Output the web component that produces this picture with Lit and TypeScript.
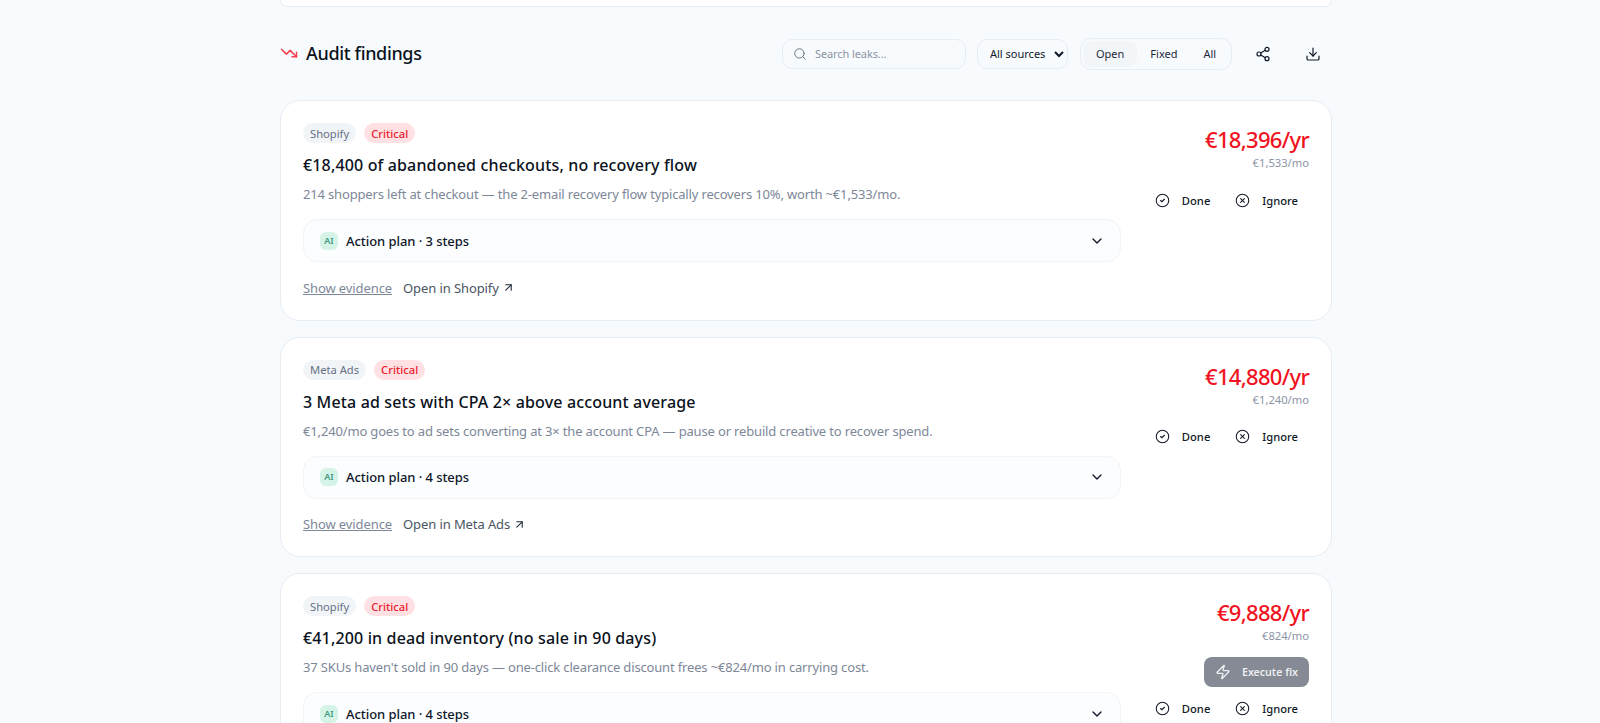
import { LitElement, html, css, svg } from 'lit';
import { customElement } from 'lit/decorators.js';

interface Finding {
  source: string;
  title: string;
  desc: string;
  yearly: string;
  monthly: string;
  steps: number;
  fix?: boolean;
  // the last card runs past the fold, its link row is never on screen
  belowFold?: boolean;
}

const findings: Finding[] = [
  {
    source: 'Shopify',
    title: '€18,400 of abandoned checkouts, no recovery flow',
    desc: '214 shoppers left at checkout — the 2-email recovery flow typically recovers 10%, worth ~€1,533/mo.',
    yearly: '€18,396/yr',
    monthly: '€1,533/mo',
    steps: 3,
  },
  {
    source: 'Meta Ads',
    title: '3 Meta ad sets with CPA 2× above account average',
    desc: '€1,240/mo goes to ad sets converting at 3× the account CPA — pause or rebuild creative to recover spend.',
    yearly: '€14,880/yr',
    monthly: '€1,240/mo',
    steps: 4,
  },
  {
    source: 'Shopify',
    title: '€41,200 in dead inventory (no sale in 90 days)',
    desc: "37 SKUs haven't sold in 90 days — one-click clearance discount frees ~€824/mo in carrying cost.",
    yearly: '€9,888/yr',
    monthly: '€824/mo',
    steps: 4,
    fix: true,
    belowFold: true,
  },
];

const icon = (size: number, body: unknown, width = 2) => html`
  <svg width=${size} height=${size} viewBox="0 0 24 24" fill="none" stroke="currentColor"
    stroke-width=${width} stroke-linecap="round" stroke-linejoin="round">${body}</svg>
`;

const icons = {
  trend: svg`<polyline points="22 17 13.5 8.5 8.5 13.5 2 7"/><polyline points="16 17 22 17 22 11"/>`,
  search: svg`<circle cx="11" cy="11" r="8"/><path d="m21 21-4.3-4.3"/>`,
  share: svg`<circle cx="18" cy="5" r="3"/><circle cx="6" cy="12" r="3"/><circle cx="18" cy="19" r="3"/><line x1="8.59" y1="13.51" x2="15.42" y2="17.49"/><line x1="15.41" y1="6.51" x2="8.59" y2="10.49"/>`,
  download: svg`<path d="M21 15v4a2 2 0 0 1-2 2H5a2 2 0 0 1-2-2v-4"/><polyline points="7 10 12 15 17 10"/><line x1="12" y1="15" x2="12" y2="3"/>`,
  check: svg`<circle cx="12" cy="12" r="10"/><path d="m9 12 2 2 4-4"/>`,
  x: svg`<circle cx="12" cy="12" r="10"/><path d="m15 9-6 6"/><path d="m9 9 6 6"/>`,
  chevron: svg`<path d="m6 9 6 6 6-6"/>`,
  arrow: svg`<path d="M7 7h10v10"/><path d="M7 17 17 7"/>`,
  zap: svg`<path d="M4 14a1 1 0 0 1-.78-1.63l9.9-10.2a.5.5 0 0 1 .86.46l-1.92 6.02A1 1 0 0 0 13 10h7a1 1 0 0 1 .78 1.63l-9.9 10.2a.5.5 0 0 1-.86-.46l1.92-6.02A1 1 0 0 0 11 14z"/>`,
};

@customElement('app-root')
export class AppRoot extends LitElement {
  static styles = css`
    :host {
      display: block;
      height: 723px;
      overflow: hidden;
      background: #f8fbfe;
      font-family: 'Noto Sans', 'Open Sans', sans-serif;
      color: #0f172a;
    }

    .page {
      width: 1052px;
      margin-left: 280px;
    }

    .prev-card {
      height: 7px;
      box-sizing: border-box;
      background: #fff;
      border: 1px solid #e8edf3;
      border-top: none;
      border-radius: 0 0 20px 20px;
    }

    .head {
      display: flex;
      align-items: center;
      justify-content: space-between;
      height: 36px;
      margin: 28px 0 29px;
    }

    .heading {
      display: flex;
      align-items: center;
      gap: 8px;
      color: #f43f4e;
    }

    h2 {
      margin: 0;
      font-size: 18px;
      font-weight: 500;
      color: #0b1220;
      letter-spacing: -0.35px;
    }

    .tools {
      display: flex;
      align-items: center;
      gap: 12px;
      margin-top: 1px;
    }

    .search {
      display: flex;
      align-items: center;
      gap: 8px;
      box-sizing: border-box;
      width: 184px;
      height: 30px;
      margin-right: -1px;
      padding: 0 10px;
      border: 1px solid #e8edf3;
      border-radius: 10px;
      font-size: 11px;
      letter-spacing: -0.1px;
      color: #8d95a3;
    }

    .search svg {
      color: #6b7280;
    }

    select {
      box-sizing: border-box;
      width: 91px;
      height: 30px;
      padding: 0 2px 0 8px;
      border: 1px solid #e8edf3;
      border-radius: 10px;
      background: #f8fbfe;
      font: inherit;
      font-size: 11px;
      color: #0f172a;
    }

    .segment {
      display: flex;
      box-sizing: border-box;
      width: 152px;
      height: 32px;
      padding: 2px;
      border: 1px solid #e8edf3;
      border-radius: 11px;
    }

    .segment span {
      display: flex;
      align-items: center;
      padding: 0 13px;
      border-radius: 9px;
      font-size: 11px;
      color: #1e293b;
    }

    .segment .on {
      background: #f3f6f9;
    }

    .icon-btn {
      display: flex;
      align-items: center;
      justify-content: center;
      width: 38px;
      height: 32px;
      color: #111827;
    }

    .cards {
      display: flex;
      flex-direction: column;
      gap: 16px;
    }

    .card {
      display: flex;
      gap: 25px;
      padding: 22px;
      background: #fff;
      border: 1px solid #e8edf3;
      border-radius: 20px;
    }

    .main {
      flex: 1;
      min-width: 0;
    }

    .pills {
      display: flex;
      gap: 8px;
    }

    .pill {
      display: flex;
      align-items: center;
      height: 20px;
      padding: 0 7px;
      border-radius: 10px;
      font-size: 11.2px;
      background: #f2f5f8;
      color: #667085;
    }

    .pill.crit {
      background: #ffe0e3;
      color: #e8202e;
      font-weight: 500;
    }

    h3 {
      margin: 10px 0 0;
      font-size: 16px;
      line-height: 24px;
      font-weight: 500;
      letter-spacing: 0.15px;
      color: #0b1220;
    }

    .desc {
      margin: 7px 0 0;
      font-size: 13px;
      line-height: 20px;
      letter-spacing: -0.16px;
      color: #7d8798;
    }

    .plan {
      display: flex;
      align-items: center;
      gap: 8px;
      box-sizing: border-box;
      height: 43px;
      margin-top: 15px;
      padding: 0 15px 0 16px;
      background: #fcfdfe;
      border: 1px solid #f0f3f7;
      border-radius: 14px;
      font-size: 13px;
      line-height: 16px;
      font-weight: 500;
      letter-spacing: -0.06px;
    }

    .ai {
      display: flex;
      align-items: center;
      justify-content: center;
      width: 18px;
      height: 18px;
      border-radius: 6px;
      background: #d5f3e7;
      color: #3f9a7f;
      font-size: 9px;
      font-weight: 600;
    }

    .plan .label {
      flex: 1;
    }

    .links {
      display: flex;
      align-items: center;
      gap: 11px;
      margin-top: 15.5px;
      font-size: 13px;
      line-height: 20px;
      letter-spacing: -0.1px;
      color: #4b5563;
    }

    .links u {
      color: #7d8798;
    }

    .links .open {
      display: flex;
      align-items: center;
      gap: 3px;
    }

    .links svg {
      color: #1f2937;
    }

    .side {
      display: flex;
      flex-direction: column;
      align-items: flex-end;
      width: 163px;
      flex: none;
    }

    .yearly {
      margin-top: 2px;
      font-size: 22px;
      line-height: 28px;
      font-weight: 500;
      color: #f01423;
      letter-spacing: -0.7px;
    }

    .monthly {
      margin-top: 2px;
      font-size: 11.2px;
      line-height: 16px;
      color: #8a94a6;
    }

    .actions {
      display: flex;
      flex-direction: column;
      align-items: flex-end;
      gap: 5px;
      margin-top: 13px;
    }

    .fix {
      display: flex;
      align-items: center;
      gap: 11px;
      box-sizing: border-box;
      width: 105px;
      height: 30px;
      padding: 0 11px;
      border-radius: 8px;
      background: #868a94;
      color: #eceef1;
      font-size: 10.6px;
      font-weight: 600;
      white-space: nowrap;
    }

    .row {
      display: flex;
      gap: 3px;
      padding-top: 1px;
    }

    .act {
      display: flex;
      align-items: center;
      gap: 12px;
      height: 30px;
      padding: 0 11px;
      font-size: 11.2px;
      font-weight: 500;
      color: #111827;
    }
  `;

  renderCard(f: Finding) {
    return html`
      <article class="card">
        <div class="main">
          <div class="pills">
            <span class="pill">${f.source}</span>
            <span class="pill crit">Critical</span>
          </div>
          <h3>${f.title}</h3>
          <p class="desc">${f.desc}</p>
          <div class="plan">
            <span class="ai">AI</span>
            <span class="label">Action plan · ${f.steps} steps</span>
            ${icon(16, icons.chevron)}
          </div>
          ${f.belowFold
            ? ''
            : html`<div class="links">
                <u>Show evidence</u>
                <span class="open">Open in ${f.source} ${icon(13, icons.arrow)}</span>
              </div>`}
        </div>
        <div class="side">
          <div class="yearly">${f.yearly}</div>
          <div class="monthly">${f.monthly}</div>
          <div class="actions">
            ${f.fix ? html`<div class="fix">${icon(16, icons.zap)} Execute fix</div>` : ''}
            <div class="row">
              <span class="act">${icon(15, icons.check, 1.7)} Done</span>
              <span class="act">${icon(15, icons.x, 1.7)} Ignore</span>
            </div>
          </div>
        </div>
      </article>
    `;
  }

  render() {
    return html`
      <div class="page">
        <div class="prev-card"></div>
        <header class="head">
          <div class="heading">
            ${icon(18, icons.trend)}
            <h2>Audit findings</h2>
          </div>
          <div class="tools">
            <div class="search">${icon(14, icons.search, 1.7)} Search leaks...</div>
            <select><option>All sources</option></select>
            <div class="segment">
              <span class="on">Open</span>
              <span>Fixed</span>
              <span>All</span>
            </div>
            <div class="icon-btn">${icon(16, icons.share, 1.8)}</div>
            <div class="icon-btn">${icon(16, icons.download, 1.8)}</div>
          </div>
        </header>
        <section class="cards">${findings.map((f) => this.renderCard(f))}</section>
      </div>
    `;
  }
}
